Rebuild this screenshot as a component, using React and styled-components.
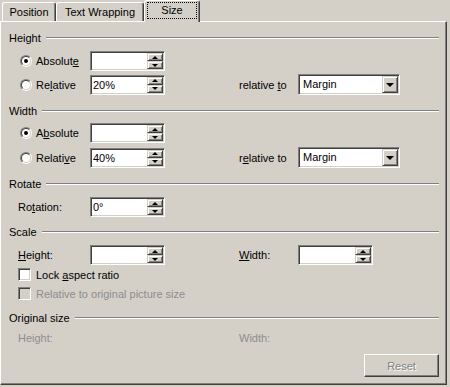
import React from 'react'
import styled, { createGlobalStyle, css } from 'styled-components';

const GlobalStyle = createGlobalStyle`
	html, body {
		margin: 0;
		padding: 0;
		background: #d4d0c8;
	}
	body {
		font-family: "Liberation Sans", Arial, sans-serif;
		font-size: 11px;
		color: #000;
	}
`;

export default function App() {
	return (
		<>
			<GlobalStyle />
			<Dialog>
				<TabBar>
					<Tab width={54}>Position</Tab>
					<Tab width={88}>Text Wrapping</Tab>
					<Tab width={56} selected><Focus>Size</Focus></Tab>
				</TabBar>
				<Panel>
					<GroupHeader top={9}>Height</GroupHeader>
					<Row top={6}>
						<Lead indent={19}><Radio checked /><span>Absolut<u>e</u></span></Lead>
						<SpinField value="" />
					</Row>
					<Row top={3}>
						<Lead indent={19}><Radio /><span>Re<u>l</u>ative</span></Lead>
						<SpinField value="20%" />
						<span />
						<RightLabel>relative <u>t</u>o</RightLabel>
						<Combo value="Margin" />
					</Row>

					<GroupHeader top={9}>Width</GroupHeader>
					<Row top={5}>
						<Lead indent={19}><Radio checked /><span>A<u>b</u>solute</span></Lead>
						<SpinField value="" />
					</Row>
					<Row top={4}>
						<Lead indent={19}><Radio /><span>Relati<u>v</u>e</span></Lead>
						<SpinField value="40%" />
						<span />
						<RightLabel>r<u>e</u>lative to</RightLabel>
						<Combo value="Margin" />
					</Row>

					<GroupHeader top={9}>Rotate</GroupHeader>
					<Row top={6}>
						<Lead indent={17}><span>Ro<u>t</u>ation:</span></Lead>
						<SpinField value="0°" />
					</Row>

					<GroupHeader top={8}>Scale</GroupHeader>
					<Row top={6}>
						<Lead indent={17}><span><u>H</u>eight:</span></Lead>
						<SpinField value="" />
						<span />
						<RightLabel><u>W</u>idth:</RightLabel>
						<SpinField value="" />
					</Row>
					<CheckRow top={3}>
						<Checkbox />
						<span>Lock <u>a</u>spect ratio</span>
					</CheckRow>
					<CheckRow top={6} disabled>
						<Checkbox disabled />
						<span>Relative to original picture size</span>
					</CheckRow>

					<GroupHeader top={11}>Original size</GroupHeader>
					<Row top={5} disabled>
						<Lead indent={17}><span>Height:</span></Lead>
						<span />
						<span />
						<RightLabel>Width:</RightLabel>
					</Row>
					<ButtonRow top={8}>
						<Button disabled>Reset</Button>
					</ButtonRow>
				</Panel>
			</Dialog>
		</>
	)
}

const GroupHeader = ({ top, children }) => (
	<HeaderRow top={top}>
		<span>{children}</span>
		<Etched />
	</HeaderRow>
);

const SpinField = ({ value }) => (
	<Field>
		<FieldText>{value}</FieldText>
		<SpinColumn>
			<SpinButton><Arrow up /></SpinButton>
			<SpinButton><Arrow /></SpinButton>
		</SpinColumn>
	</Field>
);

const Combo = ({ value }) => (
	<ComboBox>
		<FieldText>{value}</FieldText>
		<ComboButton><Arrow big /></ComboButton>
	</ComboBox>
);

const Radio = ({ checked }) => (
	<RadioOuter>
		<RadioInner>{checked && <RadioDot />}</RadioInner>
	</RadioOuter>
);

const raised = css`
	background: #d4d0c8;
	border: 1px solid;
	border-color: #d4d0c8 #404040 #404040 #d4d0c8;
	box-shadow: inset 1px 1px #fff, inset -1px -1px #808080;
`;

const sunken = css`
	border: 1px solid;
	border-color: #808080 #fff #fff #808080;
	box-shadow: inset 1px 1px #404040, inset -1px -1px #d4d0c8;
`;

const Dialog = styled.div`
	width: 450px;
	height: 387px;
	background: #d4d0c8;
	overflow: hidden;
`;

const TabBar = styled.div`
	display: flex;
	align-items: flex-end;
	height: 21px;
	padding-left: 2px;
`;

const Tab = styled.div`
	box-sizing: border-box;
	width: ${p => p.width}px;
	height: ${p => p.selected ? 22 : 19}px;
	border-left: 1px solid #fff;
	border-top: 1px solid #fff;
	border-right: 1px solid #404040;
	box-shadow: inset -1px 0 #808080;
	border-radius: 3px 3px 0 0;
	background: #d4d0c8;
	display: flex;
	align-items: center;
	justify-content: center;
	${p => p.selected && css`
		position: relative;
		z-index: 1;
		margin-bottom: -1px;
		padding-bottom: 2px;
	`}
`;

const Focus = styled.span`
	border: 1px dotted #000;
	padding: 1px 13px 2px;
`;

const Panel = styled.div`
	box-sizing: border-box;
	width: 447px;
	height: 364px;
	border-left: 1px solid #fff;
	border-top: 1px solid #fff;
	border-right: 1px solid #404040;
	border-bottom: 1px solid #404040;
	box-shadow: inset -1px -1px #808080;
	padding: 0 7px 0 0;
	display: flex;
	flex-direction: column;
`;

const HeaderRow = styled.div`
	display: flex;
	align-items: center;
	height: 14px;
	margin-top: ${p => p.top}px;
	padding-left: 8px;
`;

const Etched = styled.div`
	flex: 1;
	height: 0;
	margin-left: 5px;
	border-top: 1px solid #808080;
	border-bottom: 1px solid #fff;
`;

const Row = styled.div`
	display: grid;
	grid-template-columns: 89px 75px 74px 59px auto;
	align-items: center;
	min-height: 16px;
	margin-top: ${p => p.top}px;
	color: ${p => p.disabled ? '#8d8d8d' : '#000'};
`;

const Lead = styled.div`
	display: flex;
	align-items: center;
	gap: 4px;
	padding-left: ${p => p.indent}px;
	white-space: nowrap;
`;

const RightLabel = styled.div`
	white-space: nowrap;
`;

const Field = styled.div`
	${sunken};
	box-sizing: border-box;
	width: 75px;
	height: 20px;
	padding: 1px;
	background: #fff;
	display: flex;
`;

const FieldText = styled.div`
	flex: 1;
	padding-left: 1px;
	line-height: 16px;
	color: #000;
`;

const SpinColumn = styled.div`
	display: flex;
	flex-direction: column;
	width: 16px;
`;

const SpinButton = styled.div`
	${raised};
	box-sizing: border-box;
	flex: 1;
	display: flex;
	align-items: center;
	justify-content: center;
`;

const Arrow = styled.span`
	width: 0;
	height: 0;
	border-left: ${p => p.big ? 4 : 3}px solid transparent;
	border-right: ${p => p.big ? 4 : 3}px solid transparent;
	${p => p.up
		? css`border-bottom: 3px solid #000;`
		: css`border-top: ${p.big ? 4 : 3}px solid #000;`}
`;

const ComboBox = styled.div`
	${sunken};
	box-sizing: border-box;
	width: 102px;
	height: 21px;
	padding: 1px;
	background: #fff;
	display: flex;
	& > div:first-child {
		padding-left: 3px;
		line-height: 17px;
	}
`;

const ComboButton = styled.div`
	${raised};
	box-sizing: border-box;
	width: 16px;
	display: flex;
	align-items: center;
	justify-content: center;
`;

const RadioOuter = styled.span`
	box-sizing: border-box;
	width: 12px;
	height: 12px;
	border-radius: 50%;
	border: 1px solid;
	border-color: #808080 #fff #fff #808080;
	display: flex;
	flex-shrink: 0;
`;

const RadioInner = styled.span`
	box-sizing: border-box;
	width: 10px;
	height: 10px;
	border-radius: 50%;
	border: 1px solid;
	border-color: #404040 #d4d0c8 #d4d0c8 #404040;
	background: #fff;
	display: flex;
	align-items: center;
	justify-content: center;
`;

const RadioDot = styled.span`
	width: 4px;
	height: 4px;
	border-radius: 50%;
	background: #000;
`;

const CheckRow = styled.div`
	display: flex;
	align-items: center;
	gap: 5px;
	height: 13px;
	padding-left: 17px;
	margin-top: ${p => p.top}px;
	color: ${p => p.disabled ? '#8d8d8d' : '#000'};
`;

const Checkbox = styled.span`
	${sunken};
	box-sizing: border-box;
	width: 13px;
	height: 13px;
	flex-shrink: 0;
	background: ${p => p.disabled ? '#d4d0c8' : '#fff'};
`;

const ButtonRow = styled.div`
	display: flex;
	justify-content: flex-end;
	margin-top: ${p => p.top}px;
`;

const Button = styled.div`
	${raised};
	border-color: #fff #404040 #404040 #fff;
	box-shadow: inset -1px -1px #808080;
	box-sizing: border-box;
	width: 75px;
	height: 23px;
	display: flex;
	align-items: center;
	justify-content: center;
	color: ${p => p.disabled ? '#808080' : '#000'};
	text-shadow: ${p => p.disabled ? '1px 1px #fff' : 'none'};
`;
